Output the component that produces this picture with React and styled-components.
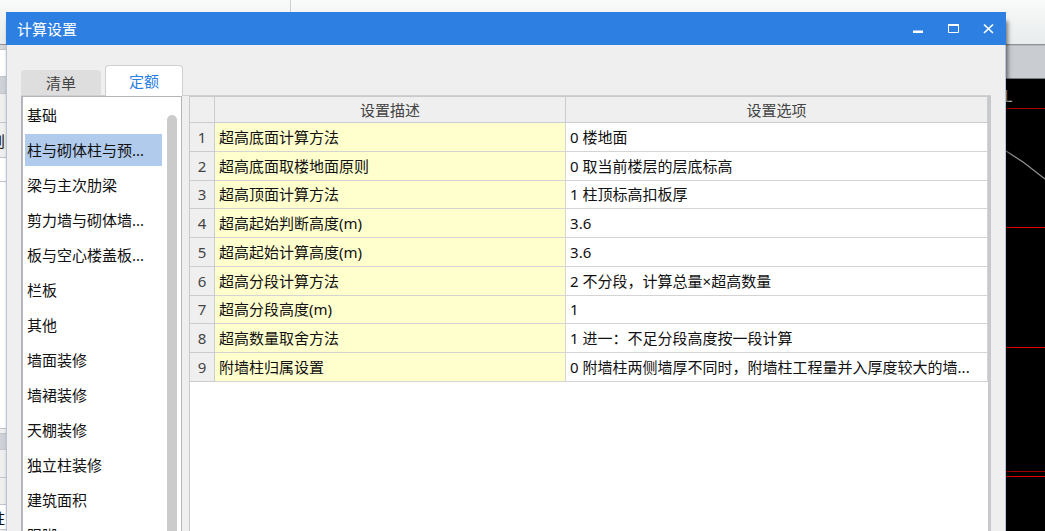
import { useState } from 'react'
import styled, { createGlobalStyle } from 'styled-components'

const GlobalStyle = createGlobalStyle`
  * {
    box-sizing: border-box;
  }
  body {
    margin: 0;
    overflow: hidden;
    font-family: 'Noto Sans', 'Noto Sans CJK SC', sans-serif;
    font-size: 15px;
    line-height: 22px;
    color: #111;
  }
  button {
    font: inherit;
    color: inherit;
    border: 0;
    padding: 0;
    background: none;
  }
`

const Desktop = styled.div`
  position: relative;
  display: flex;
  flex-direction: column;
  height: 100vh;
  overflow: hidden;
  background: #efefef;
`
const Ribbon = styled.div`
  display: flex;
  flex: none;
  height: 45px;
  border-bottom: 1px solid #8e9296;
  background: linear-gradient(#f9fafa, #e8ecec);
`
const RibbonGroup = styled.div`
  width: 291px;
  border-right: 1px solid #cdd0d2;
`
const Workspace = styled.div`
  display: flex;
  flex: 1;
  min-height: 0;
`
const SidePanel = styled.div`
  flex: 1;
  overflow: hidden;
`
const PanelRow = styled.div`
  display: flex;
  align-items: center;
  height: ${(p) => p.$height}px;
  padding-top: 2px;
  border-bottom: 1px solid #c3c5c9;
  background: ${(p) => p.$color};
  white-space: nowrap;
`
const PanelText = styled.span`
  margin-left: -10px;
`
const Drawing = styled.div`
  display: flex;
  flex-direction: column;
  width: 60px;
`
const DrawingBar = styled.div`
  height: 34px;
  border-top: 1px solid #b4b7bb;
  border-bottom: 1px solid #777b80;
  background: #c9ccd1;
`
const Canvas = styled.svg`
  display: block;
  flex: 1;
  background: #000;
`

const Dialog = styled.section`
  position: absolute;
  inset: 12px 39px 0 6px;
  display: flex;
  flex-direction: column;
  background: #efefef;
  box-shadow: 2px 9px 4px rgba(0, 0, 0, 0.5);
`
const TitleBar = styled.header`
  display: flex;
  flex: none;
  align-items: center;
  height: 33px;
  padding-left: 11px;
  background: #2d80e2;
  color: #fff;
`
const Title = styled.h1`
  flex: 1;
  margin: 0;
  font-size: 15px;
  font-weight: 400;
`
const WindowBtn = styled.button`
  display: flex;
  align-items: center;
  justify-content: center;
  width: 35px;
  height: 33px;
`
const Body = styled.div`
  display: flex;
  flex: 1;
  flex-direction: column;
  min-height: 0;
  padding: 20px 14px 0;
  border: solid #b9c4d6;
  border-width: 0 1px;
`
const Tabs = styled.div`
  display: flex;
  flex: none;
  align-items: flex-end;
  gap: 4px;
`
const Tab = styled.button`
  position: relative;
  width: ${(p) => (p.$active ? 78 : 80)}px;
  height: ${(p) => (p.$active ? 31 : 25)}px;
  margin-bottom: ${(p) => (p.$active ? -1 : 0)}px;
  border: ${(p) => (p.$active ? '1px solid #cdcfd3' : '0')};
  border-bottom: 0;
  border-radius: 4px 4px 0 0;
  background: ${(p) => (p.$active ? '#fff' : '#dedede')};
  color: ${(p) => (p.$active ? '#2d80e2' : '#444')};
`
const TabPage = styled.div`
  display: flex;
  flex: 1;
  gap: 7px;
  min-height: 0;
  border-top: 1px solid #cdcfd3;
`
const ListPane = styled.div`
  display: flex;
  flex: none;
  width: 161px;
  overflow: hidden;
  border: solid #b4b5b8;
  border-width: 1px 1px 0 2px;
  background: #fff;
`
const List = styled.ul`
  display: flex;
  flex: 1;
  flex-direction: column;
  gap: 3px;
  margin: 0;
  padding: 2px 5px 0 2px;
  list-style: none;
`
const ListBtn = styled.button`
  display: block;
  width: 100%;
  height: 32px;
  padding-left: 2px;
  background: ${(p) => (p.$selected ? '#b1cbed' : 'none')};
  text-align: left;
  white-space: nowrap;
`
const ScrollThumb = styled.div`
  width: 10px;
  margin: 18px 4px 0 0;
  border-radius: 5px 5px 0 0;
  background: #cbcbcb;
`
const TableFrame = styled.div`
  flex: 1;
  min-width: 0;
  overflow: hidden;
  border: solid #c8c9cc;
  border-width: 1px 3px 0 1px;
  background: #fff;
`
const Table = styled.table`
  width: 100%;
  height: 285px;
  table-layout: fixed;
  border-collapse: separate;
  border-spacing: 0;
`
const HeadCell = styled.th`
  width: ${(p) => p.$width};
  height: 26px;
  padding: 0;
  border: solid #cbcccf;
  border-width: 0 1px 1px 0;
  background: #efefef;
  color: #444;
  font-weight: 400;
`
const NumCell = styled(HeadCell)`
  height: 28px;
`
const Cell = styled.td`
  padding: 0 4px;
  border: solid #d4d4d4;
  border-width: 0 1px 1px 0;
  background: ${(p) => (p.$name ? '#ffffce' : '#fff')};
  overflow: hidden;
  white-space: nowrap;
`

const categories = [
  '基础',
  '柱与砌体柱与预...',
  '梁与主次肋梁',
  '剪力墙与砌体墙...',
  '板与空心楼盖板...',
  '栏板',
  '其他',
  '墙面装修',
  '墙裙装修',
  '天棚装修',
  '独立柱装修',
  '建筑面积',
  '踢脚'
]

const settings = [
  ['超高底面计算方法', '0 楼地面'],
  ['超高底面取楼地面原则', '0 取当前楼层的层底标高'],
  ['超高顶面计算方法', '1 柱顶标高扣板厚'],
  ['超高起始判断高度(m)', '3.6'],
  ['超高起始计算高度(m)', '3.6'],
  ['超高分段计算方法', '2 不分段，计算总量×超高数量'],
  ['超高分段高度(m)', '1'],
  ['超高数量取舍方法', '1 进一：不足分段高度按一段计算'],
  ['附墙柱归属设置', '0 附墙柱两侧墙厚不同时，附墙柱工程量并入厚度较大的墙...']
]

const Background = () => (
  <>
    <Ribbon>
      <RibbonGroup />
    </Ribbon>
    <Workspace>
      <SidePanel>
        <PanelRow $height={5} $color='#d4d6d9' />
        <PanelRow $height={27} $color='#fff' />
        <PanelRow $height={17} $color='#cfd1d9' />
        <PanelRow $height={29} $color='#efefef' />
        <PanelRow $height={35} $color='#efefef'>
          <PanelText>则附</PanelText>
        </PanelRow>
        <PanelRow $height={24} $color='#fff' />
        <PanelRow $height={247} $color='#fff' />
        <PanelRow $height={5} $color='#efefef' />
        <PanelRow $height={16} $color='#cfd1d9' />
        <PanelRow $height={28} $color='#efefef' />
        <PanelRow $height={27} $color='#efefef' />
        <PanelRow $height={25} $color='#fff'>
          <PanelText>柱</PanelText>
        </PanelRow>
      </SidePanel>
      <Drawing>
        <DrawingBar />
        <Canvas width='60' height='452'>
          <text x='19' y='23' fill='#bbb' fontSize='16'>
            L
          </text>
          <path d='M0 29.5H60' stroke='#b00000' />
          <path d='M0 148.5H60M0 268.5H60M0 397.5H60' stroke='#e80000' />
          <path d='M0 392.5H60' stroke='#a00000' />
          <path
            d='M0 59L21 72L38 83L60 100'
            fill='none'
            stroke='#8f8f8f'
            strokeWidth='1.3'
          />
        </Canvas>
      </Drawing>
    </Workspace>
  </>
)

const WindowButtons = () => (
  <>
    <WindowBtn aria-label='最小化'>
      <svg width='11' height='11' fill='#fff'>
        <path d='M0 7.5H10V10H0Z' />
      </svg>
    </WindowBtn>
    <WindowBtn aria-label='最大化'>
      <svg width='11' height='11' fill='none' stroke='#fff'>
        <path d='M.5 1V9.5H10.5V1' />
        <path d='M0 2H11' strokeWidth='2' />
      </svg>
    </WindowBtn>
    <WindowBtn aria-label='关闭'>
      <svg width='11' height='11' fill='none' stroke='#fff' strokeWidth='1.7'>
        <path d='M1 1.5L10 10M10 1.5L1 10' />
      </svg>
    </WindowBtn>
  </>
)

const App = () => {
  const [tab, setTab] = useState('定额')
  const [selected, setSelected] = useState(1)

  return (
    <Desktop>
      <GlobalStyle />
      <Background />
      <Dialog role='dialog' aria-labelledby='dialog-title'>
        <TitleBar>
          <Title id='dialog-title'>计算设置</Title>
          <WindowButtons />
        </TitleBar>
        <Body>
          <Tabs role='tablist'>
            {['清单', '定额'].map((name) => (
              <Tab
                key={name}
                role='tab'
                aria-selected={tab === name}
                $active={tab === name}
                onClick={() => setTab(name)}
              >
                {name}
              </Tab>
            ))}
          </Tabs>
          <TabPage role='tabpanel'>
            <ListPane>
              <List>
                {categories.map((name, i) => (
                  <li key={name}>
                    <ListBtn
                      $selected={i === selected}
                      onClick={() => setSelected(i)}
                    >
                      {name}
                    </ListBtn>
                  </li>
                ))}
              </List>
              <ScrollThumb />
            </ListPane>
            <TableFrame>
              <Table>
                <thead>
                  <tr>
                    <HeadCell $width='25px' />
                    <HeadCell $width='44%'>设置描述</HeadCell>
                    <HeadCell>设置选项</HeadCell>
                  </tr>
                </thead>
                <tbody>
                  {settings.map(([name, value], i) => (
                    <tr key={name}>
                      <NumCell scope='row'>{i + 1}</NumCell>
                      <Cell $name>{name}</Cell>
                      <Cell>{value}</Cell>
                    </tr>
                  ))}
                </tbody>
              </Table>
            </TableFrame>
          </TabPage>
        </Body>
      </Dialog>
    </Desktop>
  )
}

export default App
